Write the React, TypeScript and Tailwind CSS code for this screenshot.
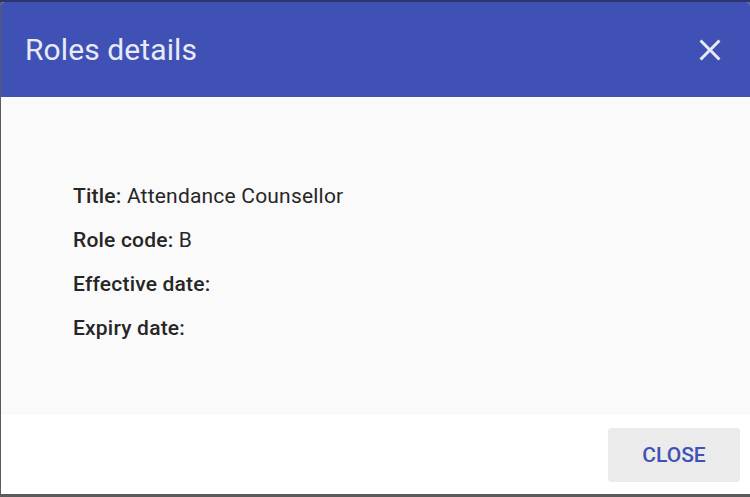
import React from "react";

export default function App() {
  return (
    <div
      className="w-[750px] h-[497px] bg-[#5b5b5b] flex flex-col overflow-hidden"
      style={{ fontFamily: "Roboto, 'Noto Sans', sans-serif" }}
    >
      <div className="h-[2px] bg-[#2b356e] shrink-0" />
      <div className="flex-1 ml-[1px] mb-[3px] flex flex-col rounded-t-[4px] overflow-hidden bg-white">
        <div className="h-[95px] shrink-0 bg-[#3f51b5] flex items-center justify-between pl-[24px] pr-[22px]">
          <h1 className="text-[30px] text-[#e8eaf6] font-normal leading-none tracking-[0.1px]">
            Roles details
          </h1>
          <svg width="36" height="36" viewBox="0 0 24 24" fill="#e8eaf6">
            <path d="M19 6.41L17.59 5 12 10.59 6.41 5 5 6.41 10.59 12 5 17.59 6.41 19 12 13.41 17.59 19 19 17.59 13.41 12z" />
          </svg>
        </div>
        <div className="h-[318px] shrink-0 bg-[#fafafa] pl-[72px] pt-[86px] text-[21px] text-[#262626] flex flex-col gap-[18px] leading-[26px] tracking-[0.2px]">
          <div>
            <span className="font-medium">Title:</span> Attendance Counsellor
          </div>
          <div>
            <span className="font-medium">Role code:</span> B
          </div>
          <div>
            <span className="font-medium">Effective date:</span>
          </div>
          <div>
            <span className="font-medium">Expiry date:</span>
          </div>
        </div>
        <div className="flex-1 bg-white flex items-start justify-end pt-[13px] pr-[10px]">
          <button className="w-[132px] h-[54px] rounded-[4px] bg-[#ebebeb] text-[#3f51b5] text-[21px] font-medium uppercase pt-[2px]">
            Close
          </button>
        </div>
      </div>
    </div>
  );
}
